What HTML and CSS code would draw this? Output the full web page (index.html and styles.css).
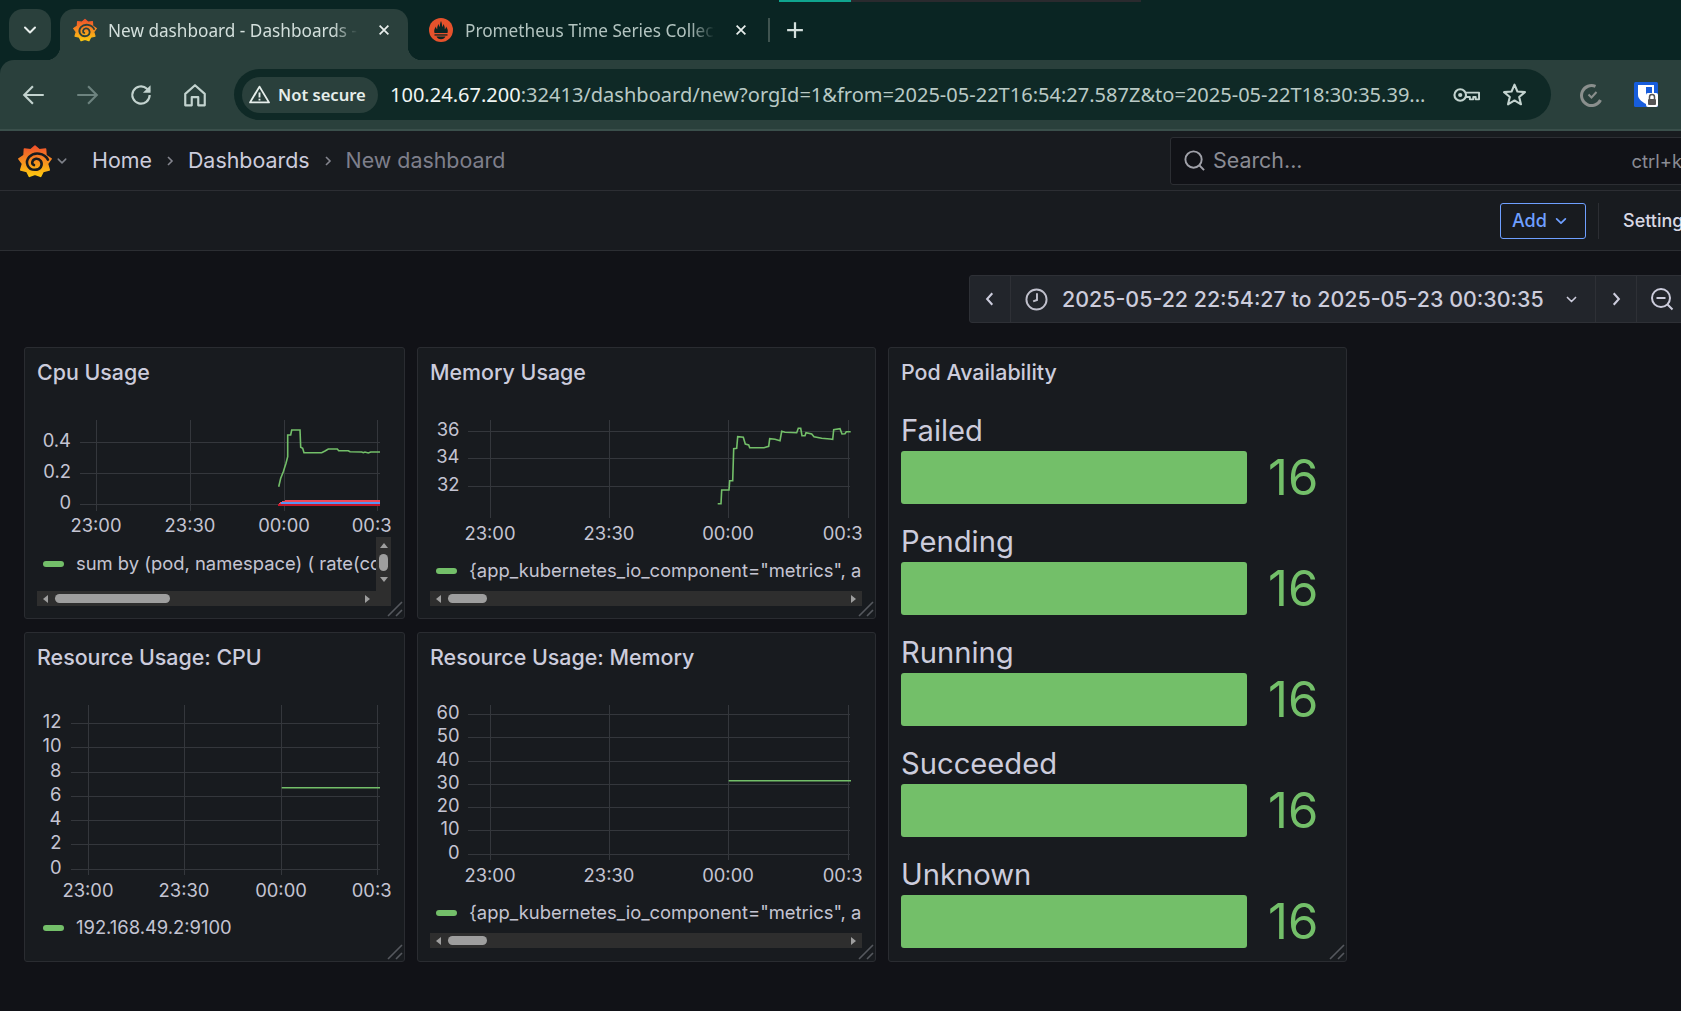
FILE: index.html
```
<!DOCTYPE html>
<html lang="en">
<head>
<meta charset="utf-8">
<title>New dashboard - Dashboards - Grafana</title>
<link rel="stylesheet" href="styles.css">
</head>
<body>
<svg class="defs" width="0" height="0" aria-hidden="true">
  <defs>
    <linearGradient id="gf" x1="0" y1="0" x2="0" y2="1">
      <stop offset="0" stop-color="#f0512b"/>
      <stop offset=".55" stop-color="#f7931e"/>
      <stop offset="1" stop-color="#fdc80f"/>
    </linearGradient>
    <symbol id="grafana" viewBox="0 0 100 100">
      <polygon points="50,6 62.7,17.2 80.9,15.2 82,33.5 97.3,43.7 86.4,58.4 91.6,76 73.8,80.3 66.4,95 50,89 33.6,95 26.2,80.3 8.4,76 13.6,58.4 2.7,43.7 18,33.5 19.1,15.2 37.3,17.2" fill="url(#gf)" stroke="url(#gf)" stroke-width="5" stroke-linejoin="round"/>
      <path d="M88 46C78 26 48 22 33 38C19 54 29 76 50 76C66 76 74 62 67 50C60 40 45 42 42 53C41 58 44 61 47 62" fill="none" stroke="currentColor" stroke-width="7.500" stroke-linecap="round"/>
    </symbol>
    <symbol id="chev" viewBox="0 0 16 16">
      <path d="M3 5.500l5 5 5-5" fill="none" stroke="currentColor" stroke-width="2" stroke-linecap="round" stroke-linejoin="round"/>
    </symbol>
    <symbol id="close" viewBox="0 0 16 16">
      <path d="M3 3l10 10M13 3L3 13" fill="none" stroke="currentColor" stroke-width="2"/>
    </symbol>
    <symbol id="crumb" viewBox="0 0 10 14">
      <path d="M3 3l4 4-4 4" fill="none" stroke="currentColor" stroke-width="1.600"/>
    </symbol>
    <symbol id="grip" viewBox="0 0 16 16">
      <path d="M1 15L15 1M9 15l6-6" fill="none" stroke="#55585e" stroke-width="1.600"/>
    </symbol>
  </defs>
</svg>

<header class="chrome">
  <div class="tabstrip">
    <div class="progress"><span class="progress-done"></span><span class="progress-rest"></span></div>
    <button class="tab-list"><svg class="ic16" viewBox="0 0 16 16"><use href="#chev"/></svg></button>
    <div class="tab tab-active">
      <svg class="favicon fav-active"><use href="#grafana"/></svg>
      <span class="tab-title">New dashboard - Dashboards - Grafana</span>
      <svg class="tab-close"><use href="#close"/></svg>
    </div>
    <div class="tab tab-idle">
      <svg class="favicon" viewBox="0 0 24 24">
        <circle cx="12" cy="12" r="12" fill="#e6522c"/>
        <path d="M5.500 15c-1-3 .5-5 1.500-6.500 0 1.500.5 2.200 1.200 2.700C8 8.500 9 7 9.700 6c0 1.500.6 2.500 1 3 .2-2 .6-4.500 1.300-6 .7 1.500 1.100 4 1.300 6 .4-.5 1-1.500 1-3 .7 1 1.700 2.500 1.500 5.200.7-.5 1.200-1.200 1.200-2.700 1 1.500 2.500 3.500 1.500 6.500z" fill="#0a2523"/>
        <path d="M5.500 16.300h13v1.300h-13z" fill="#0a2523"/>
        <path d="M7.500 18.500h9c-.5 1.600-2.400 2.700-4.500 2.700s-4-1.100-4.500-2.700z" fill="#0a2523"/>
      </svg>
      <span class="tab-title tab-title-idle">Prometheus Time Series Collection and Processing Server</span>
      <svg class="tab-close"><use href="#close"/></svg>
    </div>
    <span class="tab-sep"></span>
    <svg class="tab-new" viewBox="0 0 16 16"><path d="M8 1v14M1 8h14" fill="none" stroke="currentColor" stroke-width="2"/></svg>
  </div>
  <div class="toolbar">
    <svg class="nav" viewBox="0 0 24 24"><path d="M21 12H4M11 4l-8 8 8 8" fill="none" stroke="currentColor" stroke-width="2"/></svg>
    <svg class="nav nav-off" viewBox="0 0 24 24"><path d="M3 12h17M13 4l8 8-8 8" fill="none" stroke="currentColor" stroke-width="2"/></svg>
    <svg class="nav" viewBox="0 0 24 24"><path d="M20 12a8 8 0 1 1-2.500-5.800L20 8.500" fill="none" stroke="currentColor" stroke-width="2"/><path d="M20.800 3v7h-7z" fill="currentColor"/></svg>
    <svg class="nav" viewBox="0 0 24 24"><path d="M3 11l9-8 9 8v10.500h-6V14H9v7.500H3z" fill="none" stroke="currentColor" stroke-width="2" stroke-linejoin="round"/></svg>
    <div class="omnibox">
      <div class="chip">
        <svg class="warn" viewBox="0 0 20 18"><path d="M10 1.500L19 16.500H1z" fill="none" stroke="currentColor" stroke-width="1.800" stroke-linejoin="round"/><path d="M10 7v4.800M10 13v1.800" stroke="currentColor" stroke-width="1.800"/></svg>
        <span>Not secure</span>
      </div>
      <span class="url"><b class="url-host">100.24.67.200</b>:32413/dashboard/new?orgId=1&amp;from=2025-05-22T16:54:27.587Z&amp;to=2025-05-22T18:30:35.39...</span>
      <svg class="key" viewBox="0 0 28 16"><circle cx="7.500" cy="8" r="6" fill="none" stroke="currentColor" stroke-width="2.200"/><circle cx="7.500" cy="8" r="2.200" fill="currentColor"/><path d="M13.500 5.500H27v7h-3.500V10H21v2.500h-3.500V10h-4" fill="none" stroke="currentColor" stroke-width="2" stroke-linejoin="round"/></svg>
      <svg class="star" viewBox="0 0 24 24"><path d="M12 2.500l2.800 6.600 7.200.6-5.500 4.700 1.700 7-6.200-3.700-6.200 3.700 1.700-7L2 9.700l7.200-.6z" fill="none" stroke="currentColor" stroke-width="2" stroke-linejoin="round"/></svg>
    </div>
    <svg class="ext-check" viewBox="0 0 24 24"><path d="M15.500 3.400A10 10 0 1 0 20.500 17" fill="none" stroke="#8a8f8d" stroke-width="3"/><path d="M8.500 11.500l3 3 5-5.500" fill="none" stroke="#8a8f8d" stroke-width="2"/></svg>
    <svg class="ext-lock" viewBox="0 0 24 25"><rect width="24" height="25" rx="1.500" fill="#175ddc"/><path d="M4 3h16v10c0 4-4 7-8 9-4-2-8-5-8-9z" fill="#fff"/><path d="M12 5h6v8c0 2.500-3 5-6 6.500z" fill="#175ddc"/><rect x="12" y="11" width="12" height="14" rx="2" fill="#fff"/><rect x="14" y="17" width="8" height="6" rx="1" fill="#555"/><path d="M15.500 17v-2a2.500 2.500 0 0 1 5 0v2" fill="none" stroke="#555" stroke-width="1.500"/></svg>
  </div>
</header>

<div class="gf-top">
  <svg class="gf-logo"><use href="#grafana"/></svg>
  <svg class="gf-logo-chev"><use href="#chev"/></svg>
  <nav class="crumbs">
    <a class="crumb">Home</a>
    <svg class="crumb-sep"><use href="#crumb"/></svg>
    <a class="crumb">Dashboards</a>
    <svg class="crumb-sep"><use href="#crumb"/></svg>
    <span class="crumb crumb-current">New dashboard</span>
  </nav>
  <div class="search">
    <svg class="search-ic" viewBox="0 0 24 24"><circle cx="11" cy="11" r="8.500" fill="none" stroke="currentColor" stroke-width="2"/><path d="M17 17l5 5" stroke="currentColor" stroke-width="2"/></svg>
    <span class="search-text">Search...</span>
    <span class="search-key">ctrl+k</span>
  </div>
</div>

<div class="gf-actions">
  <button class="btn-add">Add<svg class="btn-chev"><use href="#chev"/></svg></button>
  <span class="act-div"></span>
  <span class="settings">Settings</span>
</div>

<main class="main">
  <div class="timebar">
    <div class="tb-seg tb-arrow"><svg class="tb-ic" viewBox="0 0 10 14"><path d="M7 2L2.500 7 7 12" fill="none" stroke="currentColor" stroke-width="1.800"/></svg></div>
    <div class="tb-seg tb-range">
      <svg class="clock" viewBox="0 0 24 24"><circle cx="12" cy="12" r="10.500" fill="none" stroke="currentColor" stroke-width="2"/><path d="M12.500 5.500v7l-4 1.500" fill="none" stroke="currentColor" stroke-width="2"/></svg>
      <span class="tb-text">2025-05-22 22:54:27 to 2025-05-23 00:30:35</span>
      <svg class="tb-chev"><use href="#chev"/></svg>
    </div>
    <div class="tb-seg tb-arrow"><svg class="tb-ic" viewBox="0 0 10 14"><path d="M3 2l4.500 5L3 12" fill="none" stroke="currentColor" stroke-width="1.800"/></svg></div>
    <div class="tb-seg tb-zoom"><svg class="zoom-ic" viewBox="0 0 24 24"><circle cx="11" cy="11" r="9" fill="none" stroke="currentColor" stroke-width="2"/><path d="M17.500 17.500l5 5M6.500 11h9" stroke="currentColor" stroke-width="2"/></svg></div>
  </div>

  <div class="panels">
    <section class="panel">
      <h2 class="panel-title">Cpu Usage</h2>
      <svg class="chart chart-cpu" viewBox="37 405 354 132">
        <g class="grid">
          <path d="M80 442.500H380M80 473.500H380M80 504.500H380M96.500 420V511M190.500 420V511M284.500 420V511M377.500 420V511"/>
        </g>
        <text class="axis end" x="71" y="447">0.4</text>
        <text class="axis end" x="71" y="478">0.2</text>
        <text class="axis end" x="71" y="509">0</text>
        <text class="axis mid" x="96" y="532">23:00</text>
        <text class="axis mid" x="190" y="532">23:30</text>
        <text class="axis mid" x="284" y="532">00:00</text>
        <text class="axis mid" x="377.500" y="532">00:30</text>
        <polyline class="series" points="278.700,486.700 280.700,478.300 283.300,471.700 286,463.300 287.700,456.700 287.700,435 290.700,435 291.700,430 300,430 300.700,447.300 302.700,448.300 304,452.700 321.700,452.700 325,451 328.300,449 337.300,449 338.700,450.700 348.300,450.700 350,451.700 361.700,452 363.300,452.700 365,452 368.300,453 370.700,452 380,452"/>
        <polyline class="band s-red" points="279,504 283,502 288,501 380,501"/>
        <polyline class="band s-blue" points="281,503 380,503"/>
        <polyline class="band s-dark" points="278,505 380,505"/>
      </svg>
      <div class="legend-wrap legend-cpu">
        <div class="legend legend-fill">
          <span class="swatch"></span><span class="legend-label">sum by (pod, namespace) ( rate(container_cpu_usage_seconds_total[5m]) )</span>
        </div>
        <div class="vbar">
          <span class="arr arr-up"></span>
          <span class="vthumb"></span>
          <span class="arr arr-down"></span>
        </div>
      </div>
      <div class="hbar hbar-corner">
        <span class="arr arr-left"></span>
        <div class="htrack"><span class="hthumb hthumb-long"></span></div>
        <span class="arr arr-right"></span>
      </div>
      <svg class="grip"><use href="#grip"/></svg>
    </section>

    <section class="panel">
      <h2 class="panel-title">Memory Usage</h2>
      <svg class="chart chart-mem" viewBox="430 405 432 146">
        <g class="grid">
          <path d="M468 431.500H850M468 458.500H850M468 486.500H850M490.500 420V518M609.500 420V518M728.500 420V518M848.500 420V518"/>
        </g>
        <text class="axis end" x="459.500" y="436">36</text>
        <text class="axis end" x="459.500" y="463">34</text>
        <text class="axis end" x="459.500" y="491">32</text>
        <text class="axis mid" x="490" y="540">23:00</text>
        <text class="axis mid" x="609" y="540">23:30</text>
        <text class="axis mid" x="728" y="540">00:00</text>
        <text class="axis mid" x="848.500" y="540">00:30</text>
        <polyline class="series" points="717.700,503.700 721,503.700 721.700,490 729,490 729.700,480.700 732.700,480.700 733.700,448.700 736.700,448.300 737.700,436.700 743.300,437.300 745.300,444 748.700,445 749.700,447.700 764,447.700 768.700,446.300 769.700,438.700 775,439.300 780,440.700 781.700,431.300 785,432.300 796.700,432.700 798.300,428.300 800.700,428.300 802,435.700 805,435.700 806,432.700 811.700,434 814,436.700 821.700,438.300 830,439 832.700,439.300 833.700,429.700 840,428.700 842,434 845,433.700 846.300,431.700 850.700,431.700"/>
      </svg>
      <div class="legend-wrap legend-mem">
        <div class="legend legend-fill">
          <span class="swatch"></span><span class="legend-label">{app_kubernetes_io_component="metrics", app_kubernetes_io_instance="prometheus"}</span>
        </div>
      </div>
      <div class="hbar">
        <span class="arr arr-left"></span>
        <div class="htrack"><span class="hthumb"></span></div>
        <span class="arr arr-right"></span>
      </div>
      <svg class="grip"><use href="#grip"/></svg>
    </section>

    <section class="panel panel-pods">
      <h2 class="panel-title">Pod Availability</h2>
      <div class="pods">
        <div class="pod"><div class="pod-label">Failed</div><div class="pod-row"><div class="pod-bar"></div><div class="pod-val">16</div></div></div>
        <div class="pod"><div class="pod-label">Pending</div><div class="pod-row"><div class="pod-bar"></div><div class="pod-val">16</div></div></div>
        <div class="pod"><div class="pod-label">Running</div><div class="pod-row"><div class="pod-bar"></div><div class="pod-val">16</div></div></div>
        <div class="pod"><div class="pod-label">Succeeded</div><div class="pod-row"><div class="pod-bar"></div><div class="pod-val">16</div></div></div>
        <div class="pod"><div class="pod-label">Unknown</div><div class="pod-row"><div class="pod-bar"></div><div class="pod-val">16</div></div></div>
      </div>
      <svg class="grip"><use href="#grip"/></svg>
    </section>

    <section class="panel">
      <h2 class="panel-title">Resource Usage: CPU</h2>
      <svg class="chart chart-rcpu" viewBox="37 690 354 218">
        <g class="grid">
          <path d="M71 723.500H380M71 747.500H380M71 772.500H380M71 796.500H380M71 820.500H380M71 844.500H380M71 869.500H380M88.500 705V875M184.500 705V875M281.500 705V875M377.500 705V875"/>
        </g>
        <text class="axis end" x="61.500" y="727.500">12</text>
        <text class="axis end" x="61.500" y="752">10</text>
        <text class="axis end" x="61.500" y="776.500">8</text>
        <text class="axis end" x="61.500" y="801">6</text>
        <text class="axis end" x="61.500" y="825">4</text>
        <text class="axis end" x="61.500" y="849">2</text>
        <text class="axis end" x="61.500" y="874">0</text>
        <text class="axis mid" x="88" y="896.500">23:00</text>
        <text class="axis mid" x="184" y="896.500">23:30</text>
        <text class="axis mid" x="281" y="896.500">00:00</text>
        <text class="axis mid" x="377.500" y="896.500">00:30</text>
        <polyline class="series" points="281.700,787.700 380,787.700"/>
      </svg>
      <div class="legend-wrap legend-rcpu">
        <div class="legend legend-fill">
          <span class="swatch"></span><span class="legend-label">192.168.49.2:9100</span>
        </div>
      </div>
      <svg class="grip"><use href="#grip"/></svg>
    </section>

    <section class="panel">
      <h2 class="panel-title">Resource Usage: Memory</h2>
      <svg class="chart chart-rmem" viewBox="430 690 432 203">
        <g class="grid">
          <path d="M468 714.500H850M468 737.500H850M468 761.500H850M468 784.500H850M468 807.500H850M468 830.500H850M468 854.500H850M490.500 705V860M609.500 705V860M728.500 705V860M848.500 705V860"/>
        </g>
        <text class="axis end" x="459.500" y="719">60</text>
        <text class="axis end" x="459.500" y="742">50</text>
        <text class="axis end" x="459.500" y="766">40</text>
        <text class="axis end" x="459.500" y="789">30</text>
        <text class="axis end" x="459.500" y="812">20</text>
        <text class="axis end" x="459.500" y="835">10</text>
        <text class="axis end" x="459.500" y="859">0</text>
        <text class="axis mid" x="490" y="882">23:00</text>
        <text class="axis mid" x="609" y="882">23:30</text>
        <text class="axis mid" x="728" y="882">00:00</text>
        <text class="axis mid" x="848.500" y="882">00:30</text>
        <polyline class="series" points="728.700,780.700 851,780.700"/>
      </svg>
      <div class="legend-wrap legend-mem">
        <div class="legend legend-fill">
          <span class="swatch"></span><span class="legend-label">{app_kubernetes_io_component="metrics", app_kubernetes_io_instance="prometheus"}</span>
        </div>
      </div>
      <div class="hbar">
        <span class="arr arr-left"></span>
        <div class="htrack"><span class="hthumb"></span></div>
        <span class="arr arr-right"></span>
      </div>
      <svg class="grip"><use href="#grip"/></svg>
    </section>
  </div>
</main>
</body>
</html>
```
FILE: styles.css
```
* { box-sizing: border-box; }
html, body { margin: 0; height: 100%; }
body {
  width: 1681px;
  height: 1011px;
  overflow: hidden;
  background: #111217;
  color: #ccccdc;
  font-family: Inter, "Liberation Sans", sans-serif;
}
.defs { position: absolute; }
button { font: inherit; color: inherit; background: none; border: 0; padding: 0; }

/* browser chrome */
.chrome { background: #0a2523; height: 131px; color: #c3d3cf; }
.tabstrip { position: relative; height: 60px; display: flex; align-items: flex-start; padding: 9px 0 0 9px; font-family: "Noto Sans", sans-serif; }
.progress { position: absolute; left: 779px; top: 0; display: flex; height: 2px; }
.progress-done { width: 72px; background: #10a58f; }
.progress-rest { width: 290px; background: #2a2a2e; }
.tab-list { width: 42px; height: 42px; border-radius: 14px; background: #2a403c; display: flex; align-items: center; justify-content: center; color: #e8eeec; }
.ic16 { width: 16px; height: 16px; }
.tab { position: relative; height: 51px; display: flex; align-items: center; padding-bottom: 9px; }
.tab-active { margin-left: 9px; width: 348px; padding-left: 13px; background: #2a403c; border-radius: 14px 14px 0 0; }
.tab-active::before, .tab-active::after { content: ""; position: absolute; bottom: 0; width: 14px; height: 14px; }
.tab-active::before { left: -14px; background: radial-gradient(circle at 0 0, transparent 14px, #2a403c 14.5px); }
.tab-active::after { right: -14px; background: radial-gradient(circle at 100% 0, transparent 14px, #2a403c 14.5px); }
.tab-idle { width: 361px; padding-left: 21px; }
.favicon { flex: none; width: 24px; height: 24px; }
.fav-active { color: #2a403c; }
.tab-title { margin: 2px 0 0 11px; width: 250px; flex: none; overflow: hidden; white-space: nowrap; font-size: 17.200px; line-height: 24px; color: #d3dfdc; -webkit-mask-image: linear-gradient(90deg, #000 90%, transparent); mask-image: linear-gradient(90deg, #000 90%, transparent); }
.tab-title-idle { margin-left: 12px; color: #b3c4c0; }
.tab-close { flex: none; width: 14px; height: 14px; margin-left: 19px; color: #e8eeec; }
.tab-sep { width: 2px; height: 24px; margin-top: 9px; margin-left: -1px; background: #3f5450; }
.tab-new { width: 18px; height: 18px; margin: 12px 0 0 16px; color: #d3dfdc; }

.toolbar { height: 71px; display: flex; align-items: flex-start; padding-top: 9px; background: #2a403c; border-radius: 14px 0 0 0; border-bottom: 2px solid #3a4f4b; }
.nav { flex: none; width: 26px; height: 26px; margin: 13px 0 0 28px; color: #c3d3cf; }
.nav:first-child { margin-left: 21px; }
.nav-off { margin-left: 27px; color: #6d837f; }
.omnibox { flex: none; margin-left: 26px; width: 1317px; height: 51px; border-radius: 26px; background: #0f2926; display: flex; align-items: center; padding-left: 8px; }
.chip { flex: none; width: 136px; height: 36px; border-radius: 18px; background: #2a403c; display: flex; align-items: center; padding-left: 7px; font: 600 16.600px/24px "Noto Sans", sans-serif; color: #e6eeeb; }
.warn { width: 21px; height: 19px; margin-right: 8px; }
.url { margin-left: 12px; width: 1040px; flex: none; white-space: nowrap; overflow: hidden; font: 400 20.050px/28px "Noto Sans", sans-serif; color: #b9c9c5; }
.url-host { font-weight: 400; color: #f0f5f3; }
.key { flex: none; width: 27px; height: 16px; margin-left: 23px; color: #c3d3cf; }
.star { flex: none; width: 25px; height: 25px; margin-left: 22px; color: #c3d3cf; }
.ext-check { flex: none; width: 24px; height: 24px; margin: 14px 0 0 29px; }
.ext-lock { flex: none; width: 24px; height: 25px; margin: 13px 0 0 30px; }

/* grafana header */
.gf-top { height: 60px; display: flex; align-items: center; padding-left: 18px; background: #181b1f; border-bottom: 1px solid #2c2e33; overflow: hidden; color: #181b1f; }
.gf-logo { flex: none; width: 34px; height: 36px; }
.gf-logo-chev { flex: none; width: 12px; height: 12px; margin-left: 4px; color: #7f828a; }
.crumbs { display: flex; align-items: center; margin-left: 24px; flex: none; width: 1078px; }
.crumb { margin-bottom: 1px; font-size: 21.400px; line-height: 28px; color: #ccccdc; }
.crumb-current { color: #7e7f8b; }
.crumb-sep { flex: none; width: 10px; height: 14px; margin: 0 13px; color: #84858e; }
.search { flex: 0 0 530px; height: 48px; display: flex; align-items: center; padding: 0 17px 0 12px; background: #111217; border: 1px solid #2c2e33; border-radius: 3px; font-size: 21.400px; color: #8a8b94; white-space: nowrap; }
.search-ic { width: 23px; height: 23px; margin-right: 7px; color: #a0a1a9; }
.search-text { margin-bottom: 1px; }
.search-key { margin-left: auto; font-size: 18.400px; }

.gf-actions { height: 60px; display: flex; align-items: center; padding-left: 1500px; background: #181b1f; border-bottom: 1px solid #2c2e33; white-space: nowrap; overflow: hidden; }
.btn-add { flex: none; width: 86px; height: 36px; display: flex; align-items: center; padding-left: 11px; border: 1px solid #6e9fff; border-radius: 3px; font-size: 18px; font-weight: 500; color: #6e9fff; }
.btn-chev { width: 14px; height: 14px; margin-left: 7px; }
.act-div { flex: none; width: 1px; height: 36px; margin-left: 12px; background: #2c2e33; }
.settings { margin-left: 24px; font-size: 18px; font-weight: 500; color: #d8d8e4; }

/* dashboard */
.main { padding: 24px 0 0 24px; }
.timebar { height: 48px; display: flex; margin-left: 945px; width: 760px; color: #ccccdc; }
.tb-seg { height: 48px; display: flex; align-items: center; background: #22252b; border: 1px solid #2e3036; margin-left: -1px; flex: none; }
.tb-seg:first-child { margin-left: 0; border-radius: 3px 0 0 3px; }
.tb-arrow { width: 42px; justify-content: center; }
.tb-ic { width: 12px; height: 16px; }
.tb-range { width: 586px; padding-left: 14px; }
.clock { width: 23px; height: 23px; color: #c0c0cc; }
.tb-text { margin-left: 14px; font-size: 21.420px; font-weight: 500; white-space: nowrap; }
.tb-chev { width: 13px; height: 13px; margin-left: 21px; }
.tb-zoom { width: 80px; padding-left: 13px; }
.zoom-ic { width: 24px; height: 24px; }

.panels { margin-top: 24px; display: grid; grid-template-columns: 381px 459px 459px; grid-template-rows: 272px 330px; column-gap: 12px; row-gap: 13px; }
.panel { position: relative; display: flex; flex-direction: column; padding: 0 13px 0 12px; background: #181b1f; border: 1px solid #2a2c31; border-radius: 3px; }
.panel-pods { grid-column: 3; grid-row: 1 / span 2; }
.panel-title { margin: 0; height: 57px; padding-top: 12px; font-size: 21.400px; line-height: 24px; font-weight: 500; color: #ccccdc; white-space: nowrap; }
.chart { display: block; flex: none; width: 100%; }
.chart-cpu { height: 132px; }
.chart-mem { height: 146px; }
.chart-rcpu { height: 218px; }
.chart-rmem { height: 203px; }
.grid path { stroke: #34373c; stroke-width: 1; fill: none; }
.axis { font-size: 18.400px; fill: #c4c4d2; font-family: Inter, sans-serif; }
.end { text-anchor: end; }
.mid { text-anchor: middle; }
.series { fill: none; stroke: #73bf69; stroke-width: 1.600; }
.band { fill: none; stroke-width: 2; shape-rendering: crispEdges; }
.s-red { stroke: #f2495c; }
.s-blue { stroke: #5794f2; }
.s-dark { stroke: #c4162a; }

.legend-wrap { display: flex; flex: none; overflow: hidden; }
.legend-cpu { height: 54px; }
.legend-mem { height: 40px; }
.legend-rcpu { height: 40px; }
.legend { display: flex; align-items: center; min-width: 0; overflow: hidden; white-space: nowrap; font-size: 18.400px; color: #c4c4d2; padding-left: 6px; }
.legend-fill { flex: 1; }
.legend-label { margin-bottom: 2px; }
.swatch { flex: none; width: 21px; height: 6px; border-radius: 3px; background: #73bf69; margin-right: 12px; }
.vbar { flex: none; width: 15px; height: 54px; background: #2e2e2e; display: flex; flex-direction: column; align-items: center; padding-top: 6px; }
.vthumb { width: 9px; height: 17px; margin: 6px 0 6px; border-radius: 5px; background: #9e9e9e; }
.hbar { flex: none; height: 15px; display: flex; align-items: center; background: #2e2e2e; padding: 0 6px; }
.hbar-corner { padding-right: 21px; }
.htrack { flex: 1; height: 9px; margin: 0 5px; }
.hthumb { display: block; width: 39px; height: 9px; border-radius: 5px; background: #9e9e9e; margin-left: 2px; }
.hthumb-long { width: 115px; }
.arr { flex: none; width: 0; height: 0; border-style: solid; border-color: transparent; }
.arr-left { border-width: 4.500px 5px 4.500px 0; border-right-color: #9e9e9e; }
.arr-right { border-width: 4.500px 0 4.500px 5px; border-left-color: #9e9e9e; }
.arr-up { border-width: 0 4.500px 5px; border-bottom-color: #9e9e9e; }
.arr-down { border-width: 5px 4.500px 0; border-top-color: #9e9e9e; }
.grip { position: absolute; right: 1px; bottom: 1px; width: 16px; height: 16px; }

.pods { display: flex; flex-direction: column; gap: 12px; }
.pod-label { height: 46px; padding-top: 5px; font-size: 29.200px; line-height: 41px; color: #ccccdc; white-space: nowrap; }
.pod-row { display: flex; height: 53px; }
.pod-bar { flex: none; width: 346px; border-radius: 3px; background: #73bf69; }
.pod-val { margin-left: 21px; font-size: 49px; line-height: 53px; color: #73bf69; }
```
